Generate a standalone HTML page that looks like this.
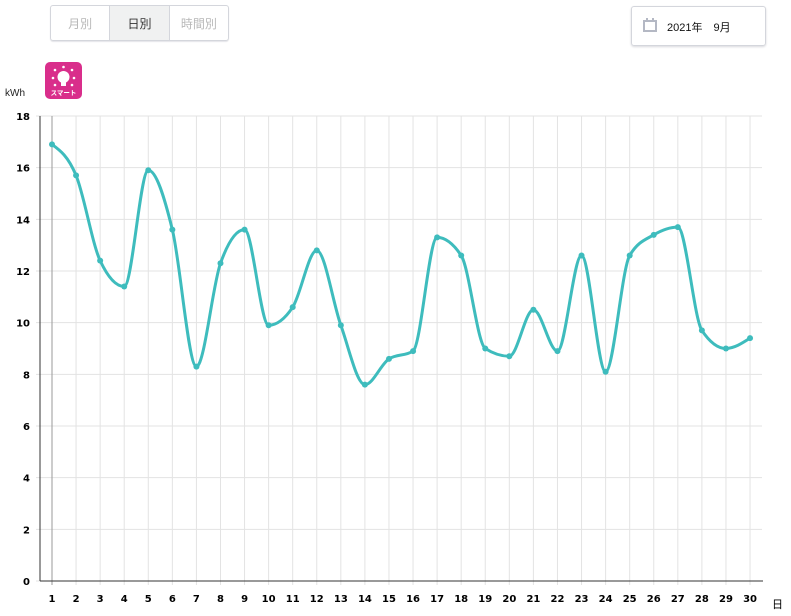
<!DOCTYPE html>
<html><head><meta charset="utf-8"><style>
body{margin:0;width:791px;height:616px;background:#fff;font-family:"Liberation Sans","Noto Sans CJK JP",sans-serif;position:relative;overflow:hidden}
.seg{position:absolute;left:50px;top:5px;width:177px;height:34px;border:1px solid #d4d6dc;border-radius:3px;display:flex;box-shadow:0 1px 1px #e4e4e8}
.seg div{flex:1;display:flex;align-items:center;justify-content:center;font-size:12px;color:#b8b8b8}
.seg div+div{border-left:1px solid #d4d6dc}
.seg .on{background:#f0f1f1;color:#333}
.date{position:absolute;left:631px;top:6px;width:133px;height:38px;border:1px solid #d4d6dc;border-radius:3px;box-shadow:0 1px 2px #d8d8dc;font-size:11px;color:#111}
.icon{position:absolute;left:45px;top:62px;width:37px;height:37px;background:#d92e8b;border-radius:5px}
</style></head><body>
<div class="seg"><div>月別</div><div class="on">日別</div><div>時間別</div></div>
<div class="date"><svg style="position:absolute;left:11px;top:11px" width="14" height="14"><rect x="1" y="3" width="12" height="10" fill="none" stroke="#b4b8c4" stroke-width="2"/><rect x="3" y="0" width="2" height="4" fill="#b4b8c4"/><rect x="9" y="0" width="2" height="4" fill="#b4b8c4"/></svg><span style="position:absolute;left:35px;top:12px">2021年　9月</span></div>
<div class="icon"><svg width="37" height="37"><circle cx="18.5" cy="15" r="6" fill="#fff"/><rect x="16" y="20" width="5" height="4" fill="#fff"/><g fill="#fff"><circle cx="10" cy="8" r="1.3"/><circle cx="27" cy="8" r="1.3"/><circle cx="18.5" cy="5" r="1.3"/><circle cx="8" cy="16" r="1.3"/><circle cx="29" cy="16" r="1.3"/><circle cx="10" cy="23" r="1.3"/><circle cx="27" cy="23" r="1.3"/></g><text x="18.5" y="33" font-size="6.5" fill="#fff" text-anchor="middle" font-weight="bold" font-family="Noto Sans CJK JP,sans-serif">スマート</text></svg></div>
<div style="position:absolute;left:5px;top:88px;font-size:10px;color:#222">kWh</div>
<svg id="c" width="791" height="616" style="position:absolute;left:0;top:0"></svg>
<script>
var v=[16.9,15.7,12.4,11.4,15.9,13.6,8.3,12.3,13.6,9.9,10.6,12.8,9.9,7.6,8.6,8.9,13.3,12.6,9.0,8.7,10.5,8.9,12.6,8.1,12.6,13.4,13.7,9.7,9.0,9.4];
function X(i){return 52+i*24.07}function Y(x){return 581-x*25.833}
var s='';
for(var k=0;k<=9;k++){var y=Y(k*2);s+='<line x1="36" x2="762" y1="'+y+'" y2="'+y+'" stroke="#e3e3e3"/>';s+='<text x="30" y="'+(y+4)+'" font-size="10" font-weight="bold" text-anchor="end" font-family="DejaVu Sans">'+(k*2)+'</text>';}
for(var i=0;i<30;i++){var x=X(i);s+='<line x1="'+x+'" x2="'+x+'" y1="116" y2="585" stroke="'+(i==0?'#999':'#e3e3e3')+'"/>';s+='<text x="'+x+'" y="602" font-size="10" font-weight="bold" text-anchor="middle" font-family="DejaVu Sans">'+(i+1)+'</text>';}
s+='<line x1="40" x2="40" y1="116" y2="581" stroke="#333"/><line x1="40" x2="763" y1="581" y2="581" stroke="#333"/>';
s+='<text x="772" y="608" font-size="11" font-family="Noto Sans CJK JP">日</text>';
var p=[];for(i=0;i<30;i++)p.push([X(i),Y(v[i])]);
var n=p.length,h=24.07,sl=[],t=[];
for(i=0;i<n-1;i++)sl.push((p[i+1][1]-p[i][1])/h);
for(i=1;i<n-1;i++){var a=sl[i-1],b=sl[i];if(a*b<=0)t[i]=0;else{var q=(a+b)/2;t[i]=(Math.sign(a)+Math.sign(b))*Math.min(Math.abs(a),Math.abs(b),0.5*Math.abs(q));}}
t[0]=(3*sl[0]-t[1])/2;t[n-1]=(3*sl[n-2]-t[n-2])/2;
var d='M'+p[0][0]+','+p[0][1];
for(i=0;i<n-1;i++){d+=' C'+(p[i][0]+h/3)+','+(p[i][1]+t[i]*h/3)+' '+(p[i+1][0]-h/3)+','+(p[i+1][1]-t[i+1]*h/3)+' '+p[i+1][0]+','+p[i+1][1];}
s+='<path d="'+d+'" fill="none" stroke="#3ebcbd" stroke-width="3"/>';
for(i=0;i<30;i++)s+='<circle cx="'+p[i][0]+'" cy="'+p[i][1]+'" r="3" fill="#3ebcbd"/>';
document.getElementById('c').innerHTML=s;
</script>
</body></html>
